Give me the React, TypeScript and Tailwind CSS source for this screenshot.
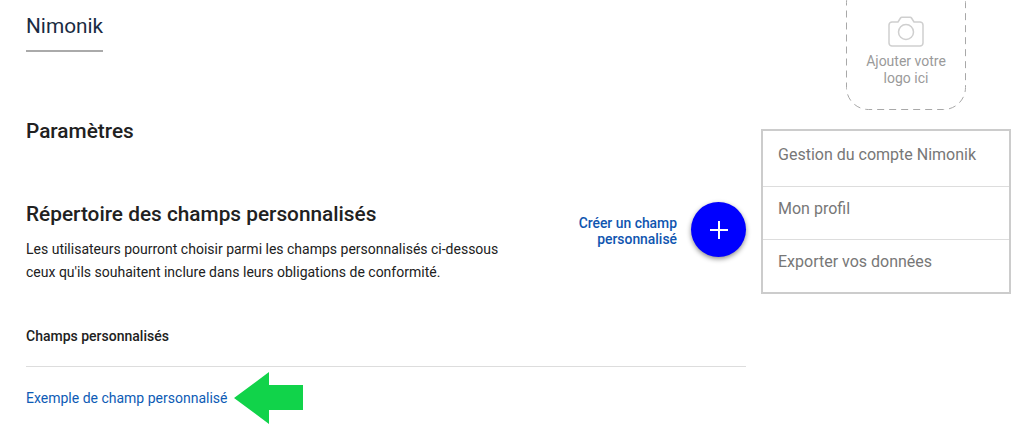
const menuItems = ['Gestion du compte Nimonik', 'Mon profil', 'Exporter vos données'];

function CameraIcon() {
  return (
    <svg width="36" height="31" viewBox="0 0 36 31" fill="none" stroke="#cfcfcf" strokeWidth="1.5">
      <path d="M4 6h6l2.5-4c.3-.5.8-.8 1.4-.8h8.2c.6 0 1.100.3 1.400.8L26 6h6c1.500 0 3 1.300 3 3v18c0 1.700-1.500 3-3 3H4c-1.500 0-3-1.300-3-3V9c0-1.700 1.500-3 3-3z" />
      <circle cx="18" cy="16" r="7.500" />
    </svg>
  );
}

export default function App() {
  return (
    <div className="relative flex h-[447px] overflow-hidden bg-white pl-[26px] font-['Roboto',sans-serif]">
      {/* Main column */}
      <div className="w-[720px] shrink-0">
        <div className="mt-[15px] w-[77px] border-b-2 border-[#aaaaaa] pb-[13px] text-[20.8px] leading-[22px] text-[#1a2b42]">
          Nimonik
        </div>

        <h1 className="mt-[66px] text-[20.8px] leading-[26px] font-medium text-[#212121]">Paramètres</h1>

        <div className="mt-[57px] flex items-start justify-between">
          <div>
            <h2 className="text-[20.8px] leading-[26px] font-medium text-[#212121]">
              Répertoire des champs personnalisés
            </h2>
            <p className="mt-[11px] text-[14px] leading-[23px] text-[#212121]">
              Les utilisateurs pourront choisir parmi les champs personnalisés ci-dessous
              <br />
              ceux qu'ils souhaitent inclure dans leurs obligations de conformité.
            </p>
          </div>
          <div className="mt-[1px] flex items-center gap-[14px]">
            <span className="mt-[2px] text-right text-[13.9px] leading-[16px] font-medium text-[#0f55b0]">
              Créer un champ
              <br />
              personnalisé
            </span>
            <button className="flex h-[55px] w-[55px] items-center justify-center rounded-full bg-[#0000ff] shadow-[0_2px_5px_rgba(0,0,0,0.45)]">
              <svg width="18" height="18" viewBox="0 0 18 18" stroke="#ffffff" strokeWidth="2">
                <path d="M9 0v18M0 9h18" />
              </svg>
            </button>
          </div>
        </div>

        <div className="mt-[43px] border-b border-[#dddddd] pb-[21px] text-[14px] leading-[18px] font-medium text-[#212121]">
          Champs personnalisés
        </div>
        <a className="mt-[22px] block text-[14px] leading-[18px] text-[#0d5bb5]">Exemple de champ personnalisé</a>
      </div>

      {/* Right column */}
      <div className="ml-[15px] w-[250px] shrink-0">
        <div className="relative -mt-[20px] ml-[85px] flex h-[130px] w-[120px] flex-col items-center pt-[36px]">
          <svg className="absolute inset-0" width="120" height="130" viewBox="0 0 120 130" fill="none">
            <rect x="0.5" y="0.5" width="119" height="129" rx="22" stroke="#a8a8a8" strokeDasharray="7 5" />
          </svg>
          <CameraIcon />
          <div className="mt-[6px] text-center text-[14px] leading-[17px] text-[#9a9a9a]">
            Ajouter votre
            <br />
            logo ici
          </div>
        </div>
        <div className="mt-[19px] border-2 border-[#cccccc]">
          {menuItems.map((item, i) => (
            <div
              key={item}
              className={
                i > 0
                  ? 'h-[53px] border-t border-[#dddddd] px-[15px] pt-[12px] text-[16px] leading-[20px] text-[#777777]'
                  : 'h-[55px] px-[15px] pt-[14px] text-[16px] leading-[20px] text-[#777777]'
              }
            >
              {item}
            </div>
          ))}
        </div>
      </div>

      {/* Annotation arrow */}
      <svg className="absolute top-[372px] left-[234px]" width="70" height="52" viewBox="0 0 70 52">
        <path d="M0 26L35 0V13H69V38H35V52Z" fill="#11d34a" />
      </svg>
    </div>
  );
}
